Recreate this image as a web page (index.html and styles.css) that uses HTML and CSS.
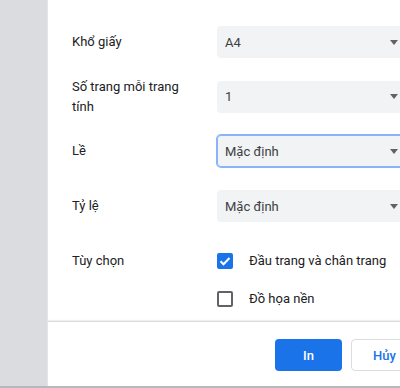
FILE: index.html
```html
<!DOCTYPE html>
<html lang="vi">
<head>
<meta charset="utf-8">
<link rel="stylesheet" href="styles.css">
</head>
<body>
<div class="app">
  <div class="sidebar"></div>
  <div class="panel">
    <div class="settings">
      <div class="row">
        <div class="label">Khổ giấy</div>
        <div class="select"><span>A4</span><span class="arrow"></span></div>
      </div>
      <div class="row">
        <div class="label">Số trang mỗi trang tính</div>
        <div class="select"><span>1</span><span class="arrow"></span></div>
      </div>
      <div class="row">
        <div class="label">Lề</div>
        <div class="select focused"><span>Mặc định</span><span class="arrow"></span></div>
      </div>
      <div class="row">
        <div class="label">Tỷ lệ</div>
        <div class="select"><span>Mặc định</span><span class="arrow"></span></div>
      </div>
      <div class="row options">
        <div class="label">Tùy chọn</div>
        <div class="checks">
          <label class="check"><span class="box checked"><svg viewBox="0 0 16 16" width="16" height="16"><path d="M3.5 8.2l3 3 6-6.2" fill="none" stroke="#fff" stroke-width="2"/></svg></span><span>Đầu trang và chân trang</span></label>
          <label class="check"><span class="box"></span><span>Đồ họa nền</span></label>
        </div>
      </div>
    </div>
    <div class="footer">
      <button class="btn primary">In</button>
      <button class="btn secondary">Hủy</button>
    </div>
  </div>
</div>
</body>
</html>
```
FILE: styles.css
```css
html, body {
  margin: 0;
  padding: 0;
}
body {
  width: 400px;
  height: 388px;
  overflow: hidden;
  font-family: Roboto, "Noto Sans", "Liberation Sans", sans-serif;
  font-size: 13px;
  color: #202124;
  box-sizing: border-box;
  border-bottom: 2px solid #b6b8bb;
}
.app {
  display: flex;
  height: 386px;
}
.sidebar {
  flex: 0 0 48px;
  background: #dadce0;
  border-right: 1px solid #e3e4e7;
  box-sizing: border-box;
}
.panel {
  flex: 1;
  min-width: 0;
  overflow: hidden;
  display: flex;
  flex-direction: column;
  background: #fff;
}
.settings {
  flex: 1;
  padding: 26px 0 0 24px;
  display: flex;
  flex-direction: column;
  gap: 22.7px;
}
.row {
  display: flex;
  align-items: center;
  height: 32px;
}
.label {
  flex: 0 0 120px;
  margin-right: 25px;
  line-height: 20px;
}
.select {
  flex: 1;
  height: 32px;
  box-sizing: border-box;
  background: #f1f3f4;
  border-radius: 4px;
  display: flex;
  align-items: center;
  justify-content: space-between;
  padding: 0 22px 0 8px;
  margin-right: -20px;
  color: #3c4043;
}
.select.focused {
  box-shadow: 0 0 0 1px #8ab4f8, inset 0 0 0 1px #8ab4f8;
}
.arrow {
  width: 0;
  height: 0;
  border-left: 4px solid transparent;
  border-right: 4px solid transparent;
  border-top: 5px solid #5f6368;
}
.options {
  align-items: flex-start;
  height: auto;
  padding-top: 6px;
}
.checks {
  display: flex;
  flex-direction: column;
  gap: 18px;
}
.check {
  display: flex;
  align-items: center;
  height: 20px;
  color: #202124;
}
.box {
  width: 16px;
  height: 16px;
  box-sizing: border-box;
  border: 2px solid #5f6368;
  border-radius: 2px;
  margin-right: 16px;
  display: flex;
  align-items: center;
  justify-content: center;
}
.box.checked {
  background: #1a73e8;
  border-color: #1a73e8;
}
.box svg {
  display: block;
  flex: none;
}
.footer {
  height: 65px;
  box-sizing: border-box;
  border-top: 1px solid #dadce0;
  box-shadow: 0 -1px 1px rgba(0,0,0,0.06);
  display: flex;
  align-items: flex-start;
  padding: 17px 0 0 227px;
  gap: 9px;
}
.btn {
  width: 67px;
  height: 32px;
  flex: none;
  border-radius: 4px;
  font-family: Roboto, "Noto Sans", "Liberation Sans", sans-serif;
  font-size: 13px;
  font-weight: 500;
  padding: 0;
  cursor: pointer;
}
.primary {
  background: #1a73e8;
  color: #fff;
  border: none;
}
.secondary {
  background: #fff;
  color: #1a73e8;
  border: 1px solid #dadce0;
}
```
